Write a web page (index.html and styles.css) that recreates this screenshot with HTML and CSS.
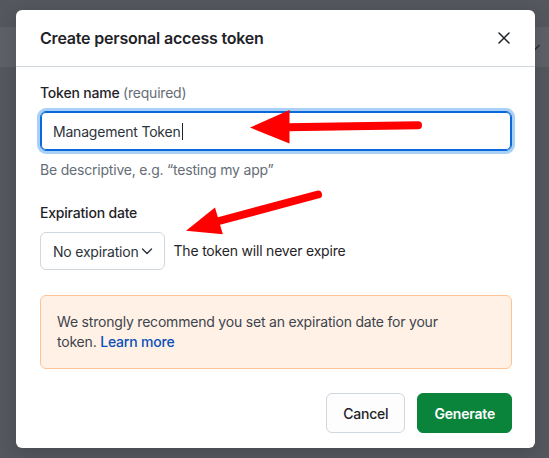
FILE: index.html
```html
<!DOCTYPE html>
<html lang="en">
<head>
<meta charset="utf-8">
<title>Create personal access token</title>
<link rel="stylesheet" href="styles.css">
</head>
<body>
  <div class="page">
    <div class="band">
      <svg class="band-chevron" width="12" height="12" viewBox="0 0 12 12"><path d="M2 4.5 L6 8.5 L10 4.5" fill="none" stroke="#2a2d33" stroke-width="1.5" stroke-linecap="round" stroke-linejoin="round"/></svg>
    </div>
  </div>

  <div class="dialog">
    <div class="dialog-header">
      <h1 class="dialog-title">Create personal access token</h1>
      <button class="close-btn" aria-label="Close">
        <svg width="12" height="12" viewBox="0 0 12 12"><path d="M1 1 L11 11 M11 1 L1 11" fill="none" stroke="#1f2328" stroke-width="1.5" stroke-linecap="round"/></svg>
      </button>
    </div>

    <div class="dialog-body">
      <div class="field">
        <div class="label">Token name <span class="muted">(required)</span></div>
        <div class="input">Management Token<span class="caret"></span></div>
        <div class="hint">Be descriptive, e.g. “testing my app”</div>
      </div>

      <div class="field field-exp">
        <div class="label">Expiration date</div>
        <div class="exp-row">
          <button class="select">No expiration
            <svg width="12" height="12" viewBox="0 0 12 12"><path d="M1.5 4 L6 8.5 L10.5 4" fill="none" stroke="#2d333b" stroke-width="1.4" stroke-linecap="round" stroke-linejoin="round"/></svg>
          </button>
          <span class="exp-note">The token will never expire</span>
        </div>
      </div>

      <div class="warning">
        <p class="warning-text">We strongly recommend you set an expiration date for your<br>token. <a class="link" href="#">Learn more</a></p>
      </div>
    </div>

    <div class="dialog-footer">
      <button class="btn">Cancel</button>
      <button class="btn btn-primary">Generate</button>
    </div>
  </div>

  <svg class="annotations" width="549" height="458" viewBox="0 0 549 458">
    <line x1="287" y1="127.2" x2="418" y2="125.3" stroke="#ff0000" stroke-width="8" stroke-linecap="round"/>
    <polygon points="250,127.6 289.5,110 289.5,143.5" fill="#ff0000"/>
    <line x1="219" y1="221" x2="318" y2="194.5" stroke="#ff0000" stroke-width="8" stroke-linecap="round"/>
    <polygon points="186,230.7 215,207.5 222.8,234.2" fill="#ff0000"/>
  </svg>
</body>
</html>
```

FILE: styles.css
```css
html, body {
  margin: 0;
  padding: 0;
}

body {
  width: 549px;
  height: 458px;
  overflow: hidden;
  position: relative;
  background: #54575e;
  font-family: Inter, "Liberation Sans", "DejaVu Sans", sans-serif;
  letter-spacing: -0.2px;
  color: #1f2328;
}

.page {
  padding-top: 27px;
}

.band {
  height: 40px;
  background: #5d6067;
  display: flex;
  justify-content: flex-end;
  align-items: center;
  padding-right: 8px;
}

.dialog {
  position: absolute;
  left: 16px;
  top: 10px;
  width: 519px;
  height: 438px;
  background: #ffffff;
  border-radius: 6px;
  display: flex;
  flex-direction: column;
  box-shadow: 0 4px 16px rgba(0, 0, 0, 0.15);
}

.dialog-header {
  height: 57px;
  box-sizing: border-box;
  border-bottom: 1px solid #d0d7de;
  display: flex;
  align-items: center;
  justify-content: space-between;
  padding: 0 15px 0 24px;
}

.dialog-title {
  margin: 0;
  font-size: 16px;
  font-weight: 600;
  line-height: 24px;
  color: #1f2328;
}

.close-btn {
  width: 32px;
  height: 32px;
  padding: 0;
  border: 0;
  background: none;
  display: flex;
  align-items: center;
  justify-content: center;
}

.dialog-body {
  padding: 16px 23px 0 24px;
}

.label {
  font-size: 14px;
  font-weight: 500;
  line-height: 20px;
  color: #1f2328;
}

.muted {
  color: #656d76;
  font-weight: 400;
}

.input {
  margin-top: 8px;
  height: 40px;
  box-sizing: border-box;
  border: 1px solid #0969da;
  border-radius: 6px;
  box-shadow: inset 0 0 0 1px #0969da, 0 0 0 3px #a9d1f8;
  padding: 0 12px;
  display: flex;
  align-items: center;
  font-size: 14px;
  color: #2d333b;
}

.caret {
  display: inline-block;
  width: 1px;
  height: 17px;
  margin-left: 1px;
  background: #1f2328;
}

.hint {
  margin-top: 9px;
  font-size: 14px;
  line-height: 20px;
  color: #656d76;
}

.field-exp {
  margin-top: 23px;
}

.exp-row {
  margin-top: 9px;
  display: flex;
  align-items: center;
  gap: 9px;
}

.select {
  height: 38px;
  box-sizing: border-box;
  border: 1px solid #d0d7de;
  border-radius: 6px;
  background: #ffffff;
  padding: 0 11px 0 12px;
  display: flex;
  align-items: center;
  gap: 2px;
  font-family: inherit;
  font-size: 14px;
  letter-spacing: -0.2px;
  color: #2d333b;
}

.exp-note {
  font-size: 14px;
  line-height: 20px;
  color: #1f2328;
}

.warning {
  margin-top: 25px;
  border: 1px solid #ffc293;
  background: #fff1e5;
  border-radius: 6px;
  padding: 16px;
}

.warning-text {
  margin: 0;
  font-size: 14px;
  line-height: 20px;
  color: #3d444d;
}

.link {
  color: #0b4fb8;
  text-decoration: none;
  font-weight: 500;
}

.dialog-footer {
  margin-top: auto;
  display: flex;
  justify-content: flex-end;
  gap: 12px;
  padding: 0 23px 15px 24px;
}

.btn {
  height: 40px;
  box-sizing: border-box;
  padding: 0 16px;
  border: 1px solid #d0d7de;
  border-radius: 6px;
  background: #fdfdfe;
  font-family: inherit;
  font-size: 14px;
  font-weight: 500;
  letter-spacing: -0.2px;
  color: #1f2328;
}

.btn-primary {
  background: #0a843b;
  border-color: #0a843b;
  color: #ffffff;
  font-weight: 600;
}

.annotations {
  position: absolute;
  left: 0;
  top: 0;
  pointer-events: none;
}
```
